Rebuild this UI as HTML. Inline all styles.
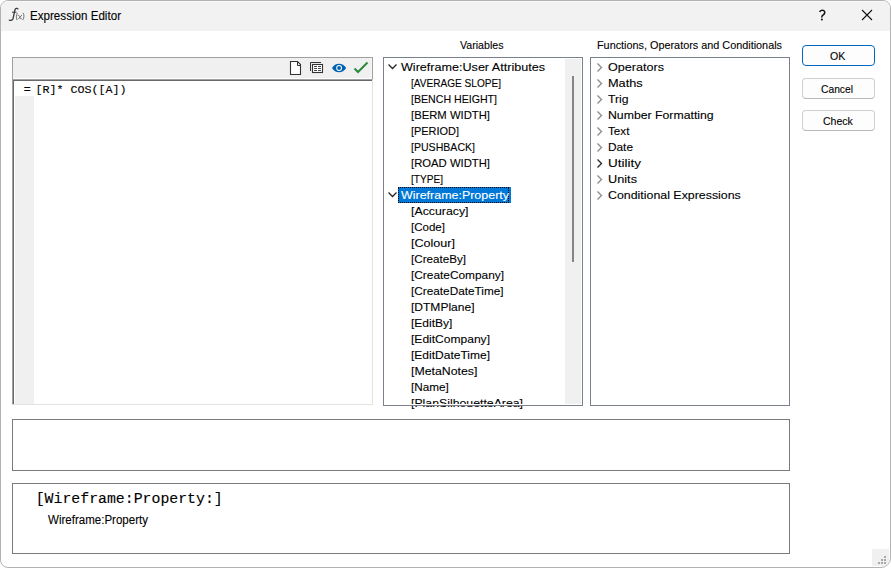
<!DOCTYPE html>
<html><head><meta charset="utf-8">
<style>
html,body{margin:0;padding:0;background:#fff;width:891px;height:568px;overflow:hidden;position:relative}
.a{position:absolute;box-sizing:border-box}
.t{position:absolute;white-space:pre;line-height:normal}
</style></head><body>
<!-- window -->
<div class="a" style="left:0;top:0;width:891px;height:568px;border:1px solid #b3b3b3;border-radius:8px 8px 10px 8px;background:#fff;overflow:hidden">
  <div class="a" style="left:0;top:0;width:889px;height:30px;background:#f2f2f2;border-top:1px solid #f8f8f8"></div>
<!-- resize grip -->
<div class="a" style="left:871px;top:548px;width:17px;height:17px;background:#f0f0f0"></div>
<svg class="a" style="left:870px;top:548px" width="17" height="17"><g fill="#a8a8a8"><rect x="13" y="7" width="2" height="2"/><rect x="10" y="10" width="2" height="2"/><rect x="13" y="10" width="2" height="2"/><rect x="7" y="13" width="2" height="2"/><rect x="10" y="13" width="2" height="2"/><rect x="13" y="13" width="2" height="2"/></g></svg>

</div>
<!-- title icon f(x) -->
<svg class="a" style="left:0;top:0" width="30" height="30"><g fill="none" stroke="#3a3a3a" stroke-linecap="round">
<path d="M18 8.9 C17 7.9 15.4 8.2 14.9 10 L13.1 18.3 C12.6 20.2 11 20.7 9.3 20.2" stroke-width="1.3"/>
<path d="M12.4 12.2 H16.1" stroke-width="1"/>
<path d="M17.2 13.2 C16.3 15 16.1 17.6 16.8 19.7" stroke-width="0.8" stroke="#555"/>
<path d="M18.2 15.4 C19.2 15.1 19.6 15.9 19.9 17.4 C20.2 18.9 20.9 19.1 21.6 18.7 M21.7 15.3 L18.3 19" stroke-width="0.8" stroke="#555"/>
<path d="M23.3 13.2 C24.3 14.9 24.2 17.6 23 19.7" stroke-width="0.8" stroke="#555"/>
</g></svg>
<!-- title buttons -->
<svg class="a" style="left:814px;top:6px" width="16" height="16"><path d="M5.6 5.9 C6.3 4.3 8.4 3.8 9.8 4.6 C11.3 5.6 10.9 7.6 9.5 8.7 C8.3 9.6 7.7 10.2 7.7 11.4" fill="none" stroke="#111" stroke-width="1.5"/><circle cx="7.9" cy="13.4" r="1" fill="#111"/></svg>
<svg class="a" style="left:861px;top:9px" width="12" height="12"><path d="M1 1 L11 11 M11 1 L1 11" stroke="#111" stroke-width="1.1" fill="none"/></svg>

<!-- toolbar -->
<div class="a" style="left:12px;top:57px;width:361px;height:22px;border:1px solid #a0a0a0;border-bottom:0;background:#f0f0f0"></div>
<div class="a" style="left:13px;top:78px;width:359px;height:1px;background:#fff"></div>
<div class="a" style="left:371px;top:58px;width:1px;height:21px;background:#f8f8f8"></div>
<!-- editor -->
<div class="a" style="left:12px;top:79px;width:361px;height:326px;border-left:1px solid #a0a0a0;border-top:1px solid #a0a0a0;border-right:1px solid #e3e3e3;border-bottom:1px solid #e3e3e3;background:#fff">
  <div class="a" style="left:0;top:0;width:359px;height:324px;border-left:1px solid #696969;border-top:1px solid #696969"></div>
</div>
<div class="a" style="left:15px;top:96px;width:19px;height:308px;background:#f0f0f0"></div>

<!-- toolbar icons -->
<svg class="a" style="left:286px;top:58px" width="88" height="20">
  <path d="M4.5 3.5 H11.5 L14.5 6.5 V16.5 H4.5 Z" fill="#fff" stroke="#333" stroke-width="1.1"/>
  <path d="M11.5 3.5 V7.5 H14.5" fill="none" stroke="#333" stroke-width="1"/>
  <path d="M24.5 13 V4.5 H35" fill="none" stroke="#333" stroke-width="1"/>
  <rect x="26.5" y="6.5" width="10" height="8" fill="#fff" stroke="#333" stroke-width="1.1"/>
  <path d="M28 8.5 H31 M32 8.5 H35 M28 10.5 H31 M32 10.5 H35 M28 12.5 H31 M32 12.5 H35" stroke="#333" stroke-width="0.9"/>
  <path d="M46 10 C49 4.3 57 4.3 60.2 10 C57 15.7 49 15.7 46 10 Z" fill="#0063b1"/>
  <circle cx="53.1" cy="10" r="2.9" fill="#fff"/>
  <circle cx="53.1" cy="10" r="1.9" fill="#0063b1"/>
  <path d="M68.5 10.5 L72 14 L81.5 4.5" fill="none" stroke="#2a8a3c" stroke-width="2"/>
</svg>

<!-- variables tree -->
<div class="a" style="left:383px;top:57px;width:200px;height:349px;border:1px solid #7a808c;background:#fff"></div>
<div class="a" style="left:565px;top:59px;width:16px;height:345px;background:#f0f0f0"></div>
<div class="a" style="left:572px;top:76px;width:2px;height:186px;background:#858585"></div>
<svg class="a" style="left:386px;top:62px" width="14" height="10"><path d="M2.5 2.5 L6.5 6.5 L10.5 2.5" fill="none" stroke="#262626" stroke-width="1.3"/></svg>
<svg class="a" style="left:386px;top:190px" width="14" height="10"><path d="M2.5 2.5 L6.5 6.5 L10.5 2.5" fill="none" stroke="#262626" stroke-width="1.3"/></svg>
<div class="a" style="left:398px;top:187px;width:113px;height:16px;background:#0078d7"></div>
<div class="a" style="left:398px;top:187px;width:111px;height:16px;border:1px dotted #000"></div>

<!-- functions tree -->
<div class="a" style="left:590px;top:57px;width:200px;height:349px;border:1px solid #7a808c;background:#fff"></div>
<svg class="a" style="left:592px;top:59px" width="14" height="160">
  <g fill="none" stroke="#8a8a8a" stroke-width="1.3">
  <path d="M5.5 4.5 L9.5 8.5 L5.5 12.5"/>
  <path d="M5.5 20.5 L9.5 24.5 L5.5 28.5"/>
  <path d="M5.5 36.5 L9.5 40.5 L5.5 44.5"/>
  <path d="M5.5 52.5 L9.5 56.5 L5.5 60.5"/>
  <path d="M5.5 68.5 L9.5 72.5 L5.5 76.5"/>
  <path d="M5.5 84.5 L9.5 88.5 L5.5 92.5"/>
  <path d="M5.5 116.5 L9.5 120.5 L5.5 124.5"/>
  <path d="M5.5 132.5 L9.5 136.5 L5.5 140.5"/>
  </g>
  <path d="M5.5 100.5 L9.5 104.5 L5.5 108.5" fill="none" stroke="#262626" stroke-width="1.3"/>
</svg>

<!-- buttons -->
<div class="a" style="left:802px;top:45px;width:73px;height:21px;border:1.5px solid #0067c0;border-radius:4px;background:#fdfdfd"></div>
<div class="a" style="left:802px;top:78px;width:73px;height:21px;border:1px solid #d0d0d0;border-bottom-color:#b8b8b8;border-radius:4px;background:#fdfdfd"></div>
<div class="a" style="left:802px;top:110px;width:73px;height:21px;border:1px solid #d0d0d0;border-bottom-color:#b8b8b8;border-radius:4px;background:#fdfdfd"></div>

<!-- lower boxes -->
<div class="a" style="left:12px;top:419px;width:778px;height:52px;border:1px solid #7a7a7a;background:#fff"></div>
<div class="a" style="left:12px;top:483px;width:778px;height:71px;border:1px solid #7a7a7a;background:#fff"></div>

<div class="t" style="left:30.1px;top:9.14px;font-family:'Liberation Sans';font-size:12px;letter-spacing:0.000px;transform:scaleX(0.9676);transform-origin:0 0;color:#000;-webkit-text-stroke:0.1px #000;">Expression Editor</div>
<div class="t" style="left:460.1px;top:39.05px;font-family:'Liberation Sans';font-size:11px;letter-spacing:0.000px;transform:scaleX(0.9657);transform-origin:0 0;color:#000;-webkit-text-stroke:0.1px #000;">Variables</div>
<div class="t" style="left:597.1px;top:39.05px;font-family:'Liberation Sans';font-size:11px;letter-spacing:0.000px;transform:scaleX(0.9855);transform-origin:0 0;color:#000;-webkit-text-stroke:0.1px #000;">Functions, Operators and Conditionals</div>
<div class="t" style="left:401.0px;top:61.05px;font-family:'Liberation Sans';font-size:11px;letter-spacing:0.000px;transform:scaleX(1.1436);transform-origin:0 0;color:#000;-webkit-text-stroke:0.1px #000;">Wireframe:User Attributes</div>
<div class="t" style="left:411.4px;top:77.05px;font-family:'Liberation Sans';font-size:11px;letter-spacing:0.000px;transform:scaleX(0.9162);transform-origin:0 0;color:#000;-webkit-text-stroke:0.1px #000;">[AVERAGE SLOPE]</div>
<div class="t" style="left:411.4px;top:93.05px;font-family:'Liberation Sans';font-size:11px;letter-spacing:0.000px;transform:scaleX(0.9638);transform-origin:0 0;color:#000;-webkit-text-stroke:0.1px #000;">[BENCH HEIGHT]</div>
<div class="t" style="left:411.4px;top:109.05px;font-family:'Liberation Sans';font-size:11px;letter-spacing:0.000px;transform:scaleX(1.0260);transform-origin:0 0;color:#000;-webkit-text-stroke:0.1px #000;">[BERM WIDTH]</div>
<div class="t" style="left:411.4px;top:125.05px;font-family:'Liberation Sans';font-size:11px;letter-spacing:0.000px;transform:scaleX(0.9939);transform-origin:0 0;color:#000;-webkit-text-stroke:0.1px #000;">[PERIOD]</div>
<div class="t" style="left:411.4px;top:141.04px;font-family:'Liberation Sans';font-size:11px;letter-spacing:0.000px;transform:scaleX(0.9604);transform-origin:0 0;color:#000;-webkit-text-stroke:0.1px #000;">[PUSHBACK]</div>
<div class="t" style="left:411.4px;top:157.04px;font-family:'Liberation Sans';font-size:11px;letter-spacing:0.000px;transform:scaleX(1.0260);transform-origin:0 0;color:#000;-webkit-text-stroke:0.1px #000;">[ROAD WIDTH]</div>
<div class="t" style="left:411.4px;top:173.04px;font-family:'Liberation Sans';font-size:11px;letter-spacing:0.000px;transform:scaleX(0.9184);transform-origin:0 0;color:#000;-webkit-text-stroke:0.1px #000;">[TYPE]</div>
<div class="t" style="left:401.2px;top:189.04px;font-family:'Liberation Sans';font-size:11px;letter-spacing:0.000px;transform:scaleX(1.1326);transform-origin:0 0;color:#fff;-webkit-text-stroke:0.1px #fff;">Wireframe:Property</div>
<div class="t" style="left:411.4px;top:205.04px;font-family:'Liberation Sans';font-size:11px;letter-spacing:0.000px;transform:scaleX(1.1196);transform-origin:0 0;color:#000;-webkit-text-stroke:0.1px #000;">[Accuracy]</div>
<div class="t" style="left:411.4px;top:221.04px;font-family:'Liberation Sans';font-size:11px;letter-spacing:0.000px;transform:scaleX(1.0487);transform-origin:0 0;color:#000;-webkit-text-stroke:0.1px #000;">[Code]</div>
<div class="t" style="left:411.4px;top:237.04px;font-family:'Liberation Sans';font-size:11px;letter-spacing:0.000px;transform:scaleX(1.1419);transform-origin:0 0;color:#000;-webkit-text-stroke:0.1px #000;">[Colour]</div>
<div class="t" style="left:411.4px;top:253.04px;font-family:'Liberation Sans';font-size:11px;letter-spacing:0.000px;transform:scaleX(1.0583);transform-origin:0 0;color:#000;-webkit-text-stroke:0.1px #000;">[CreateBy]</div>
<div class="t" style="left:411.4px;top:269.05px;font-family:'Liberation Sans';font-size:11px;letter-spacing:0.000px;transform:scaleX(1.0787);transform-origin:0 0;color:#000;-webkit-text-stroke:0.1px #000;">[CreateCompany]</div>
<div class="t" style="left:411.4px;top:285.05px;font-family:'Liberation Sans';font-size:11px;letter-spacing:0.000px;transform:scaleX(1.0717);transform-origin:0 0;color:#000;-webkit-text-stroke:0.1px #000;">[CreateDateTime]</div>
<div class="t" style="left:411.4px;top:301.05px;font-family:'Liberation Sans';font-size:11px;letter-spacing:0.000px;transform:scaleX(1.0934);transform-origin:0 0;color:#000;-webkit-text-stroke:0.1px #000;">[DTMPlane]</div>
<div class="t" style="left:411.4px;top:317.05px;font-family:'Liberation Sans';font-size:11px;letter-spacing:0.000px;transform:scaleX(1.0922);transform-origin:0 0;color:#000;-webkit-text-stroke:0.1px #000;">[EditBy]</div>
<div class="t" style="left:411.4px;top:333.05px;font-family:'Liberation Sans';font-size:11px;letter-spacing:0.000px;transform:scaleX(1.0948);transform-origin:0 0;color:#000;-webkit-text-stroke:0.1px #000;">[EditCompany]</div>
<div class="t" style="left:411.4px;top:349.05px;font-family:'Liberation Sans';font-size:11px;letter-spacing:0.000px;transform:scaleX(1.0920);transform-origin:0 0;color:#000;-webkit-text-stroke:0.1px #000;">[EditDateTime]</div>
<div class="t" style="left:411.4px;top:365.05px;font-family:'Liberation Sans';font-size:11px;letter-spacing:0.000px;transform:scaleX(1.1195);transform-origin:0 0;color:#000;-webkit-text-stroke:0.1px #000;">[MetaNotes]</div>
<div class="t" style="left:411.4px;top:381.05px;font-family:'Liberation Sans';font-size:11px;letter-spacing:0.000px;transform:scaleX(1.0657);transform-origin:0 0;color:#000;-webkit-text-stroke:0.1px #000;">[Name]</div>
<div class="t" style="left:411.4px;top:397.05px;font-family:'Liberation Sans';font-size:11px;letter-spacing:0.000px;transform:scaleX(1.1167);transform-origin:0 0;color:#000;-webkit-text-stroke:0.1px #000;">[PlanSilhouetteArea]</div>
<div class="t" style="left:608.0px;top:61.05px;font-family:'Liberation Sans';font-size:11px;letter-spacing:0.000px;transform:scaleX(1.1447);transform-origin:0 0;color:#000;-webkit-text-stroke:0.1px #000;">Operators</div>
<div class="t" style="left:608.0px;top:77.05px;font-family:'Liberation Sans';font-size:11px;letter-spacing:0.000px;transform:scaleX(1.1579);transform-origin:0 0;color:#000;-webkit-text-stroke:0.1px #000;">Maths</div>
<div class="t" style="left:608.0px;top:93.05px;font-family:'Liberation Sans';font-size:11px;letter-spacing:0.000px;transform:scaleX(1.1053);transform-origin:0 0;color:#000;-webkit-text-stroke:0.1px #000;">Trig</div>
<div class="t" style="left:608.0px;top:109.05px;font-family:'Liberation Sans';font-size:11px;letter-spacing:0.000px;transform:scaleX(1.1154);transform-origin:0 0;color:#000;-webkit-text-stroke:0.1px #000;">Number Formatting</div>
<div class="t" style="left:608.0px;top:125.05px;font-family:'Liberation Sans';font-size:11px;letter-spacing:0.000px;transform:scaleX(1.0650);transform-origin:0 0;color:#000;-webkit-text-stroke:0.1px #000;">Text</div>
<div class="t" style="left:608.0px;top:141.04px;font-family:'Liberation Sans';font-size:11px;letter-spacing:0.000px;transform:scaleX(1.0753);transform-origin:0 0;color:#000;-webkit-text-stroke:0.1px #000;">Date</div>
<div class="t" style="left:608.0px;top:157.04px;font-family:'Liberation Sans';font-size:11px;letter-spacing:0.000px;transform:scaleX(1.2272);transform-origin:0 0;color:#000;-webkit-text-stroke:0.1px #000;">Utility</div>
<div class="t" style="left:608.0px;top:173.04px;font-family:'Liberation Sans';font-size:11px;letter-spacing:0.000px;transform:scaleX(1.1571);transform-origin:0 0;color:#000;-webkit-text-stroke:0.1px #000;">Units</div>
<div class="t" style="left:608.0px;top:189.04px;font-family:'Liberation Sans';font-size:11px;letter-spacing:0.000px;transform:scaleX(1.1253);transform-origin:0 0;color:#000;-webkit-text-stroke:0.1px #000;">Conditional Expressions</div>
<div class="t" style="left:830.2px;top:49.75px;font-family:'Liberation Sans';font-size:11px;letter-spacing:0.000px;transform:scaleX(0.9619);transform-origin:0 0;color:#000;-webkit-text-stroke:0.1px #000;">OK</div>
<div class="t" style="left:821.4px;top:82.75px;font-family:'Liberation Sans';font-size:11px;letter-spacing:0.000px;transform:scaleX(0.9343);transform-origin:0 0;color:#000;-webkit-text-stroke:0.1px #000;">Cancel</div>
<div class="t" style="left:823.2px;top:114.55px;font-family:'Liberation Sans';font-size:11px;letter-spacing:0.000px;transform:scaleX(0.9555);transform-origin:0 0;color:#000;-webkit-text-stroke:0.1px #000;">Check</div>
<div class="t" style="left:47.5px;top:512.84px;font-family:'Liberation Sans';font-size:12px;letter-spacing:0.000px;transform:scaleX(0.9612);transform-origin:0 0;color:#000;-webkit-text-stroke:0.1px #000;">Wireframe:Property</div>
<div class="t" style="left:23.8px;top:83.34px;font-family:'Liberation Mono';font-size:11.6px;letter-spacing:0.000px;color:#000;-webkit-text-stroke:0.12px #000;">=</div>
<div class="t" style="left:35.4px;top:83.25px;font-family:'Liberation Mono';font-size:11.7px;letter-spacing:0.000px;color:#000;-webkit-text-stroke:0.12px #000;">[R]* COS([A])</div>
<div class="t" style="left:35.7px;top:491.43px;font-family:'Liberation Mono';font-size:14.85px;letter-spacing:0.000px;color:#000;-webkit-text-stroke:0.12px #000;">[Wireframe:Property:]</div>

<!-- clip below variables tree content -->
<div class="a" style="left:384px;top:404px;width:181px;height:1px;background:#fff"></div>
<div class="a" style="left:383px;top:405px;width:200px;height:1px;background:#7a808c"></div>
</body></html>
